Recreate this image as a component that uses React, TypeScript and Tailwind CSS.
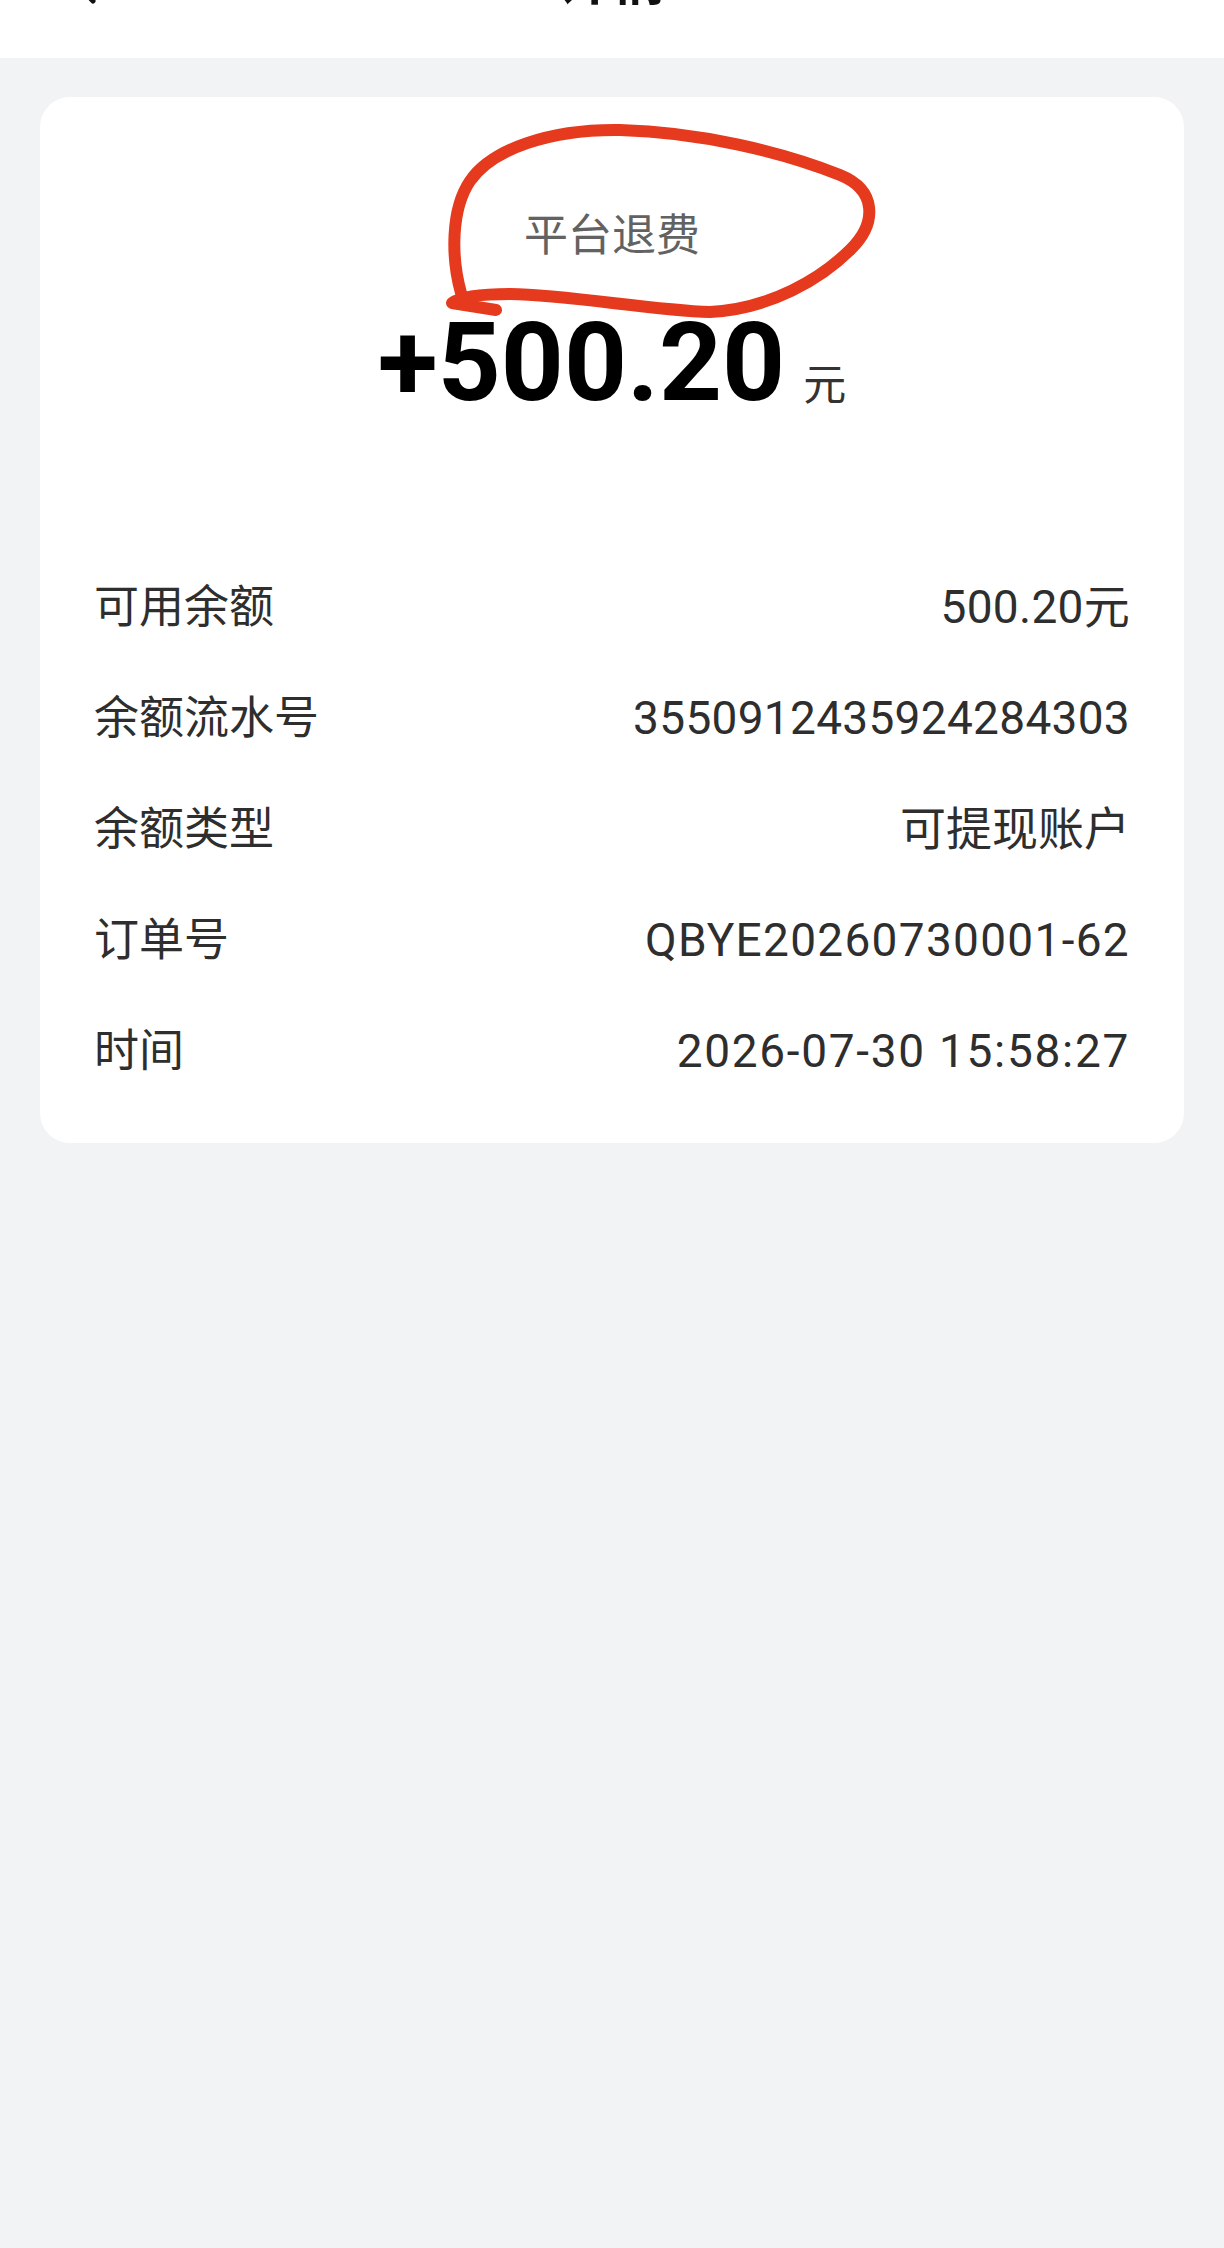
import React from 'react'

const rows: { label: string; value: string; track: string }[] = [
  { label: '可用余额', value: '500.20元', track: 'tracking-[0.3px]' },
  { label: '余额流水号', value: '3550912435924284303', track: 'tracking-[0.3px]' },
  { label: '余额类型', value: '可提现账户', track: 'tracking-normal' },
  { label: '订单号', value: 'QBYE20260730001-62', track: 'tracking-[1.3px]' },
  { label: '时间', value: '2026-07-30 15:58:27', track: 'tracking-[1.7px]' },
]

const font = 'font-["Roboto","Noto_Sans_CJK_SC",sans-serif]'

export default function App() {
  return (
    <div className={`min-h-[2248px] w-full bg-[#f2f3f5] ${font}`}>
      {/* 顶部导航，被截掉了大半 */}
      <header className="h-[58px] w-full overflow-hidden bg-white">
        <div className="-mt-[64px] flex h-[90px] items-center px-[62px]">
          <div className="flex w-[60px] items-center">
            <svg width="34" height="52" viewBox="0 0 34 52" fill="none">
              <path d="M30 0 L9 23 L31 46" stroke="#111" strokeWidth="5" strokeLinecap="round" strokeLinejoin="round" />
            </svg>
          </div>
          <div className="flex-1 text-center text-[54px] font-bold text-[#111]">详情</div>
          <div className="w-[60px]" />
        </div>
      </header>

      {/* 详情卡片 */}
      <div className="relative mx-[40px] mt-[39px] rounded-[30px] bg-white px-[54px] pb-[36px] pt-[109px]">
        <div className="text-center text-[44px] leading-[60px] text-[#626262]">平台退费</div>

        <div className="mt-[42px] flex items-baseline justify-center gap-[18px]">
          <span className="text-[110px] font-bold leading-none text-black">+500.20</span>
          <span className="text-[43px] leading-none text-[#333]">元</span>
        </div>

        <div className="mt-[134px] flex flex-col">
          {rows.map((r) => (
            <div key={r.label} className="flex h-[111px] items-center justify-between text-[45px] text-[#2e2e2e]">
              <span>{r.label}</span>
              <span className={`text-[46px] ${r.track}`}>{r.value}</span>
            </div>
          ))}
        </div>

        {/* 红色手绘圈 */}
        <svg
          className="pointer-events-none absolute left-0 top-0"
          width="900"
          height="260"
          viewBox="0 0 900 260"
          fill="none"
        >
          <path
            d="M421 196 C411 160, 411 112, 430 84 C452 52, 510 32, 580 33 C660 35, 742 55, 800 78 C837 93, 837 126, 811 152 C781 182, 730 212, 670 215 C610 213, 530 198, 470 197 C440 197, 420 200, 412 206 L456 213"
            stroke="#e63a1e"
            strokeWidth="12"
            strokeLinecap="round"
            strokeLinejoin="round"
          />
        </svg>
      </div>
    </div>
  )
}
